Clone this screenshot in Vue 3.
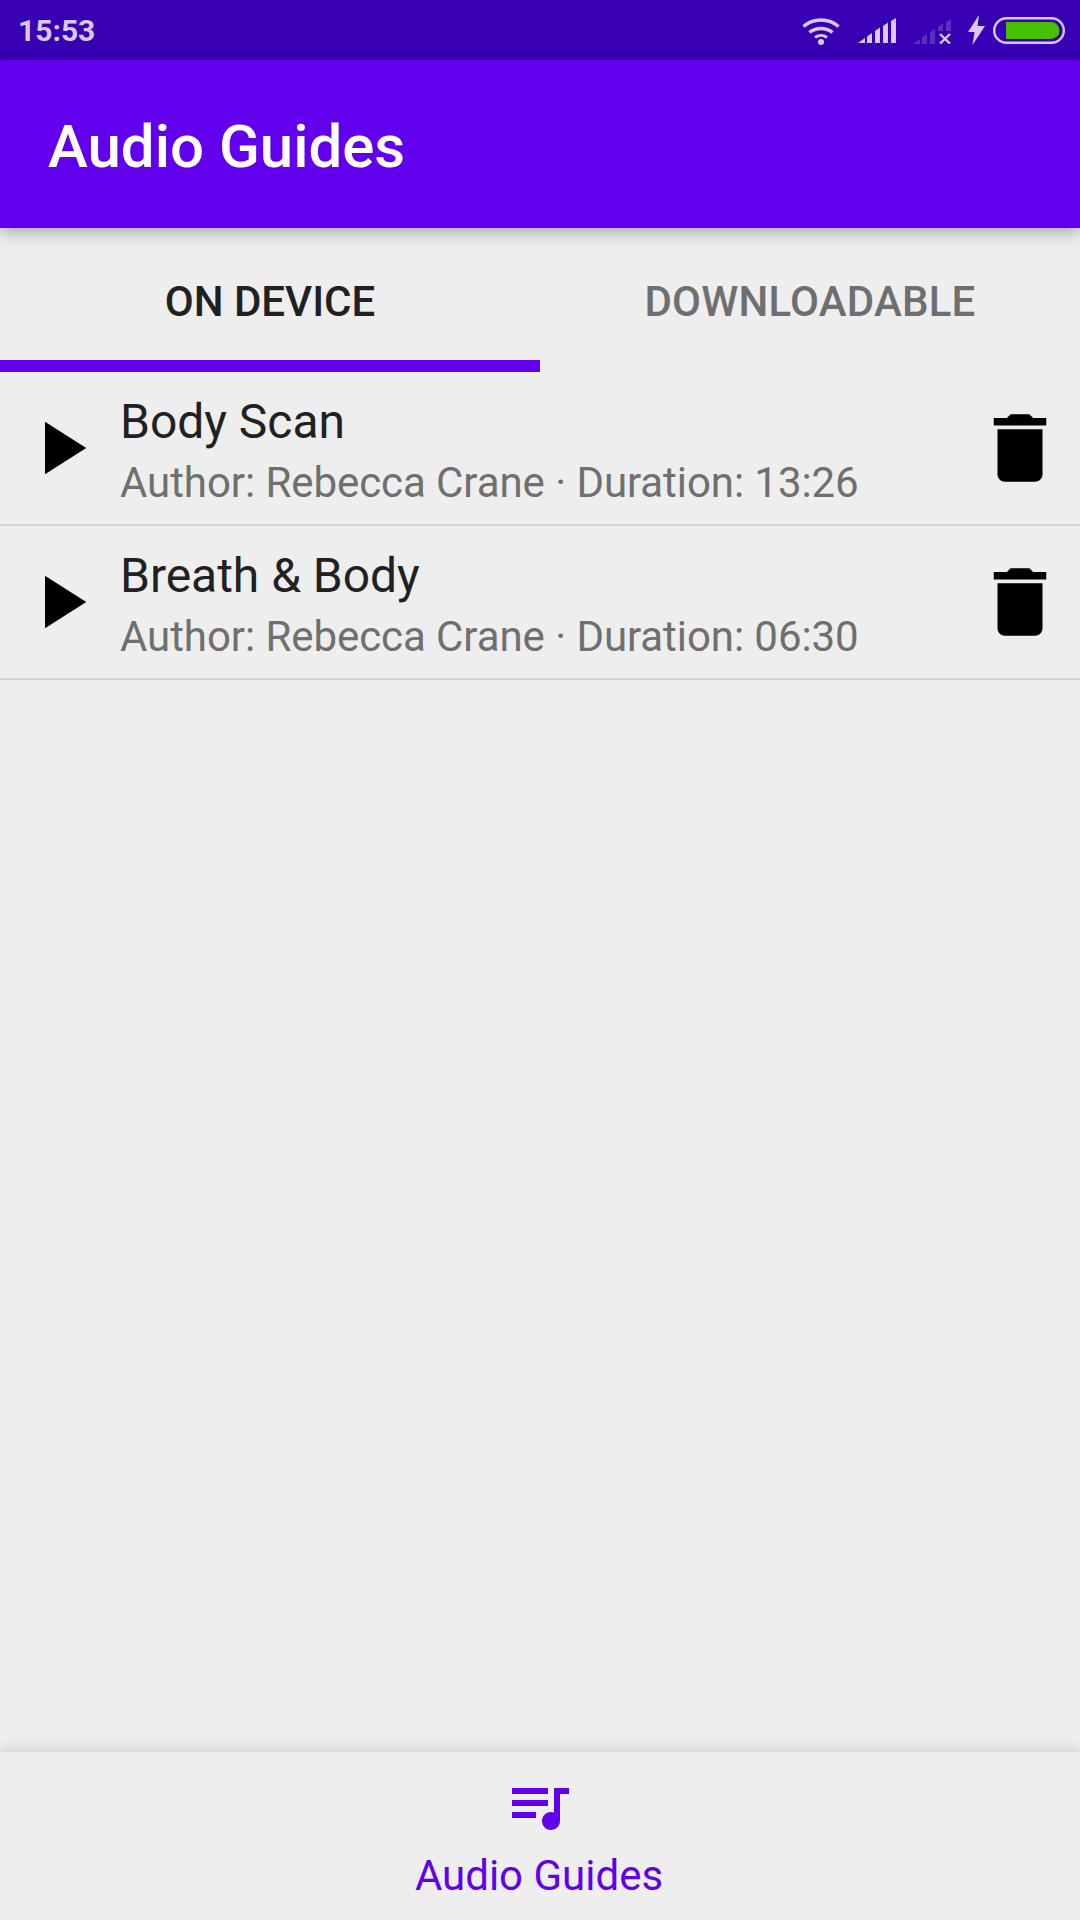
<script setup>
const guides = [
  { title: 'Body Scan', meta: 'Author: Rebecca Crane · Duration: 13:26' },
  { title: 'Breath & Body', meta: 'Author: Rebecca Crane · Duration: 06:30' },
]
</script>

<template>
  <div class="screen">
    <header class="status">
      <span class="time">15:53</span>
      <div class="status-icons">
        <svg class="wifi" width="38" height="28" viewBox="0 0 38 28">
          <path d="M1.5 9.5C11 .8 27 .8 36.500 9.500" fill="none" stroke="#d9c8f5" stroke-width="3.500"/>
          <path d="M7.500 15.500C13.500 10 24.500 10 30.500 15.500" fill="none" stroke="#d9c8f5" stroke-width="3.500"/>
          <path d="M13 20.500C16.500 17.800 21.500 17.800 25 20.500" fill="none" stroke="#d9c8f5" stroke-width="3"/>
          <circle cx="19" cy="25" r="3" fill="#d9c8f5"/>
        </svg>
        <svg class="signal" width="38" height="25" viewBox="0 0 38 25" fill="#d9c8f5">
          <path d="M0 25 7 20V25ZM9 18.500 14 15V25H9ZM17 13 22 9.500V25H17ZM25 8 30 4.500V25H25ZM33 3 38 0V25H33Z"/>
        </svg>
        <svg class="signal-off" width="38" height="26" viewBox="0 0 38 26">
          <path fill="#5a2fc0" d="M0 26 7 21V26ZM9 19.500 14 16V26H9ZM17 14 22 10.500V26H17ZM25 9 30 5.500V13H25ZM33 4 38 1V13H33Z"/>
          <path d="M27 16 37 25.500M37 16 27 25.500" stroke="#d9c8f5" stroke-width="2.400"/>
        </svg>
        <svg class="bolt" width="17" height="30" viewBox="0 0 17 30">
          <path fill="#d9c8f5" d="M11 0 0 17H6.500L4.500 30 17 11H9.500Z"/>
        </svg>
        <svg class="battery" width="72" height="27" viewBox="0 0 72 27">
          <rect x="1.200" y="1.200" width="69.600" height="24.600" rx="12.300" fill="none" stroke="#d9c8f5" stroke-width="2.400"/>
          <path fill="#46c000" d="M13 5H58A8.500 8.500 0 0 1 58 22H13Z"/>
        </svg>
      </div>
    </header>

    <div class="appbar"><span class="appbar-title">Audio Guides</span></div>

    <nav class="tabs">
      <div class="tab active"><span class="tab-text">ON DEVICE</span></div>
      <div class="tab"><span class="tab-text wide">DOWNLOADABLE</span></div>
    </nav>

    <main class="list">
      <div v-for="g in guides" :key="g.title" class="row">
        <svg class="icon play" viewBox="0 0 24 24"><path d="M8 5v14l11-7z"/></svg>
        <div class="text">
          <div class="title">{{ g.title }}</div>
          <div class="meta">{{ g.meta }}</div>
        </div>
        <svg class="icon" viewBox="0 0 24 24"><path d="M19 4h-3.500l-1-1h-5l-1 1H5v2h14zM6 19c0 1.100.9 2 2 2h8c1.100 0 2-.9 2-2V7H6z"/></svg>
      </div>
    </main>

    <footer class="bottom">
      <svg class="music" viewBox="0 0 24 24"><path d="M15 6H3v2h12V6zm0 4H3v2h12v-2zM3 16h8v-2H3v2zM17 6v8.180c-.31-.11-.65-.18-1-.18-1.660 0-3 1.340-3 3s1.340 3 3 3 3-1.340 3-3V8h3V6h-5z"/></svg>
      <span class="label">Audio Guides</span>
    </footer>
  </div>
</template>

<style scoped>
.screen {
  width: 1080px;
  height: 1920px;
  display: flex;
  flex-direction: column;
  background: #eeeeee;
  font-family: Roboto, sans-serif;
  overflow: hidden;
}
.status {
  height: 60px;
  background: #3700b3;
  display: flex;
  align-items: center;
  justify-content: space-between;
  padding: 0 15px 0 18px;
  flex: none;
}
.time {
  font-size: 30px;
  font-weight: 700;
  color: #d9c8f5;
}
.status-icons {
  display: flex;
  align-items: center;
}
.status-icons svg { display: block; }
.wifi { margin-right: 18px; margin-top: 1px; }
.signal { margin-right: 17px; margin-top: 1px; }
.signal-off { margin-right: 17px; margin-top: 1px; }
.bolt { margin-right: 8px; }
.appbar {
  height: 168px;
  flex: none;
  background: #6200ee;
  color: #fff;
  font-size: 60px;
  font-weight: 500;
  display: flex;
  align-items: center;
  padding-left: 48px;
  box-shadow: 0 5px 14px rgba(0, 0, 0, 0.28);
  position: relative;
}
.appbar-title { padding-top: 5px; }
.tabs {
  height: 144px;
  flex: none;
  display: flex;
}
.tab {
  flex: 1;
  box-sizing: border-box;
  text-align: center;
  font-size: 42px;
  font-weight: 500;
  padding-top: 2px;
  line-height: 144px;
  color: #6f6f6f;
}
.tab.active {
  color: #212121;
  border-bottom: 12px solid #6200ee;
}
.tab-text.wide { letter-spacing: 0.2px; }
.list { flex: 1; }
.row {
  height: 154px;
  box-sizing: border-box;
  border-bottom: 2px solid #d2d2d2;
  display: flex;
  align-items: center;
  padding: 0 15px 0 15px;
}
.icon {
  width: 90px;
  height: 90px;
  flex: none;
  fill: #000;
}
.text {
  flex: 1;
  margin-left: 15px;
  padding-top: 8px;
}
.title {
  font-size: 48px;
  line-height: 60px;
  letter-spacing: -0.03px;
  color: #212121;
}
.meta {
  font-size: 42px;
  line-height: 60px;
  padding-top: 1px;
  letter-spacing: -0.07px;
  color: #6f6f6f;
}
.bottom {
  height: 168px;
  flex: none;
  background: #eeeeee;
  box-shadow: 0 -3px 14px rgba(0, 0, 0, 0.13);
  display: flex;
  flex-direction: column;
  align-items: center;
  padding-top: 18px;
  box-sizing: border-box;
  position: relative;
}
.music {
  width: 72px;
  height: 72px;
  fill: #6200ee;
  flex: none;
  margin-right: 2px;
}
.label {
  font-size: 42px;
  line-height: 56px;
  padding-top: 6px;
  margin-right: 2px;
  color: #6200ee;
}
</style>
